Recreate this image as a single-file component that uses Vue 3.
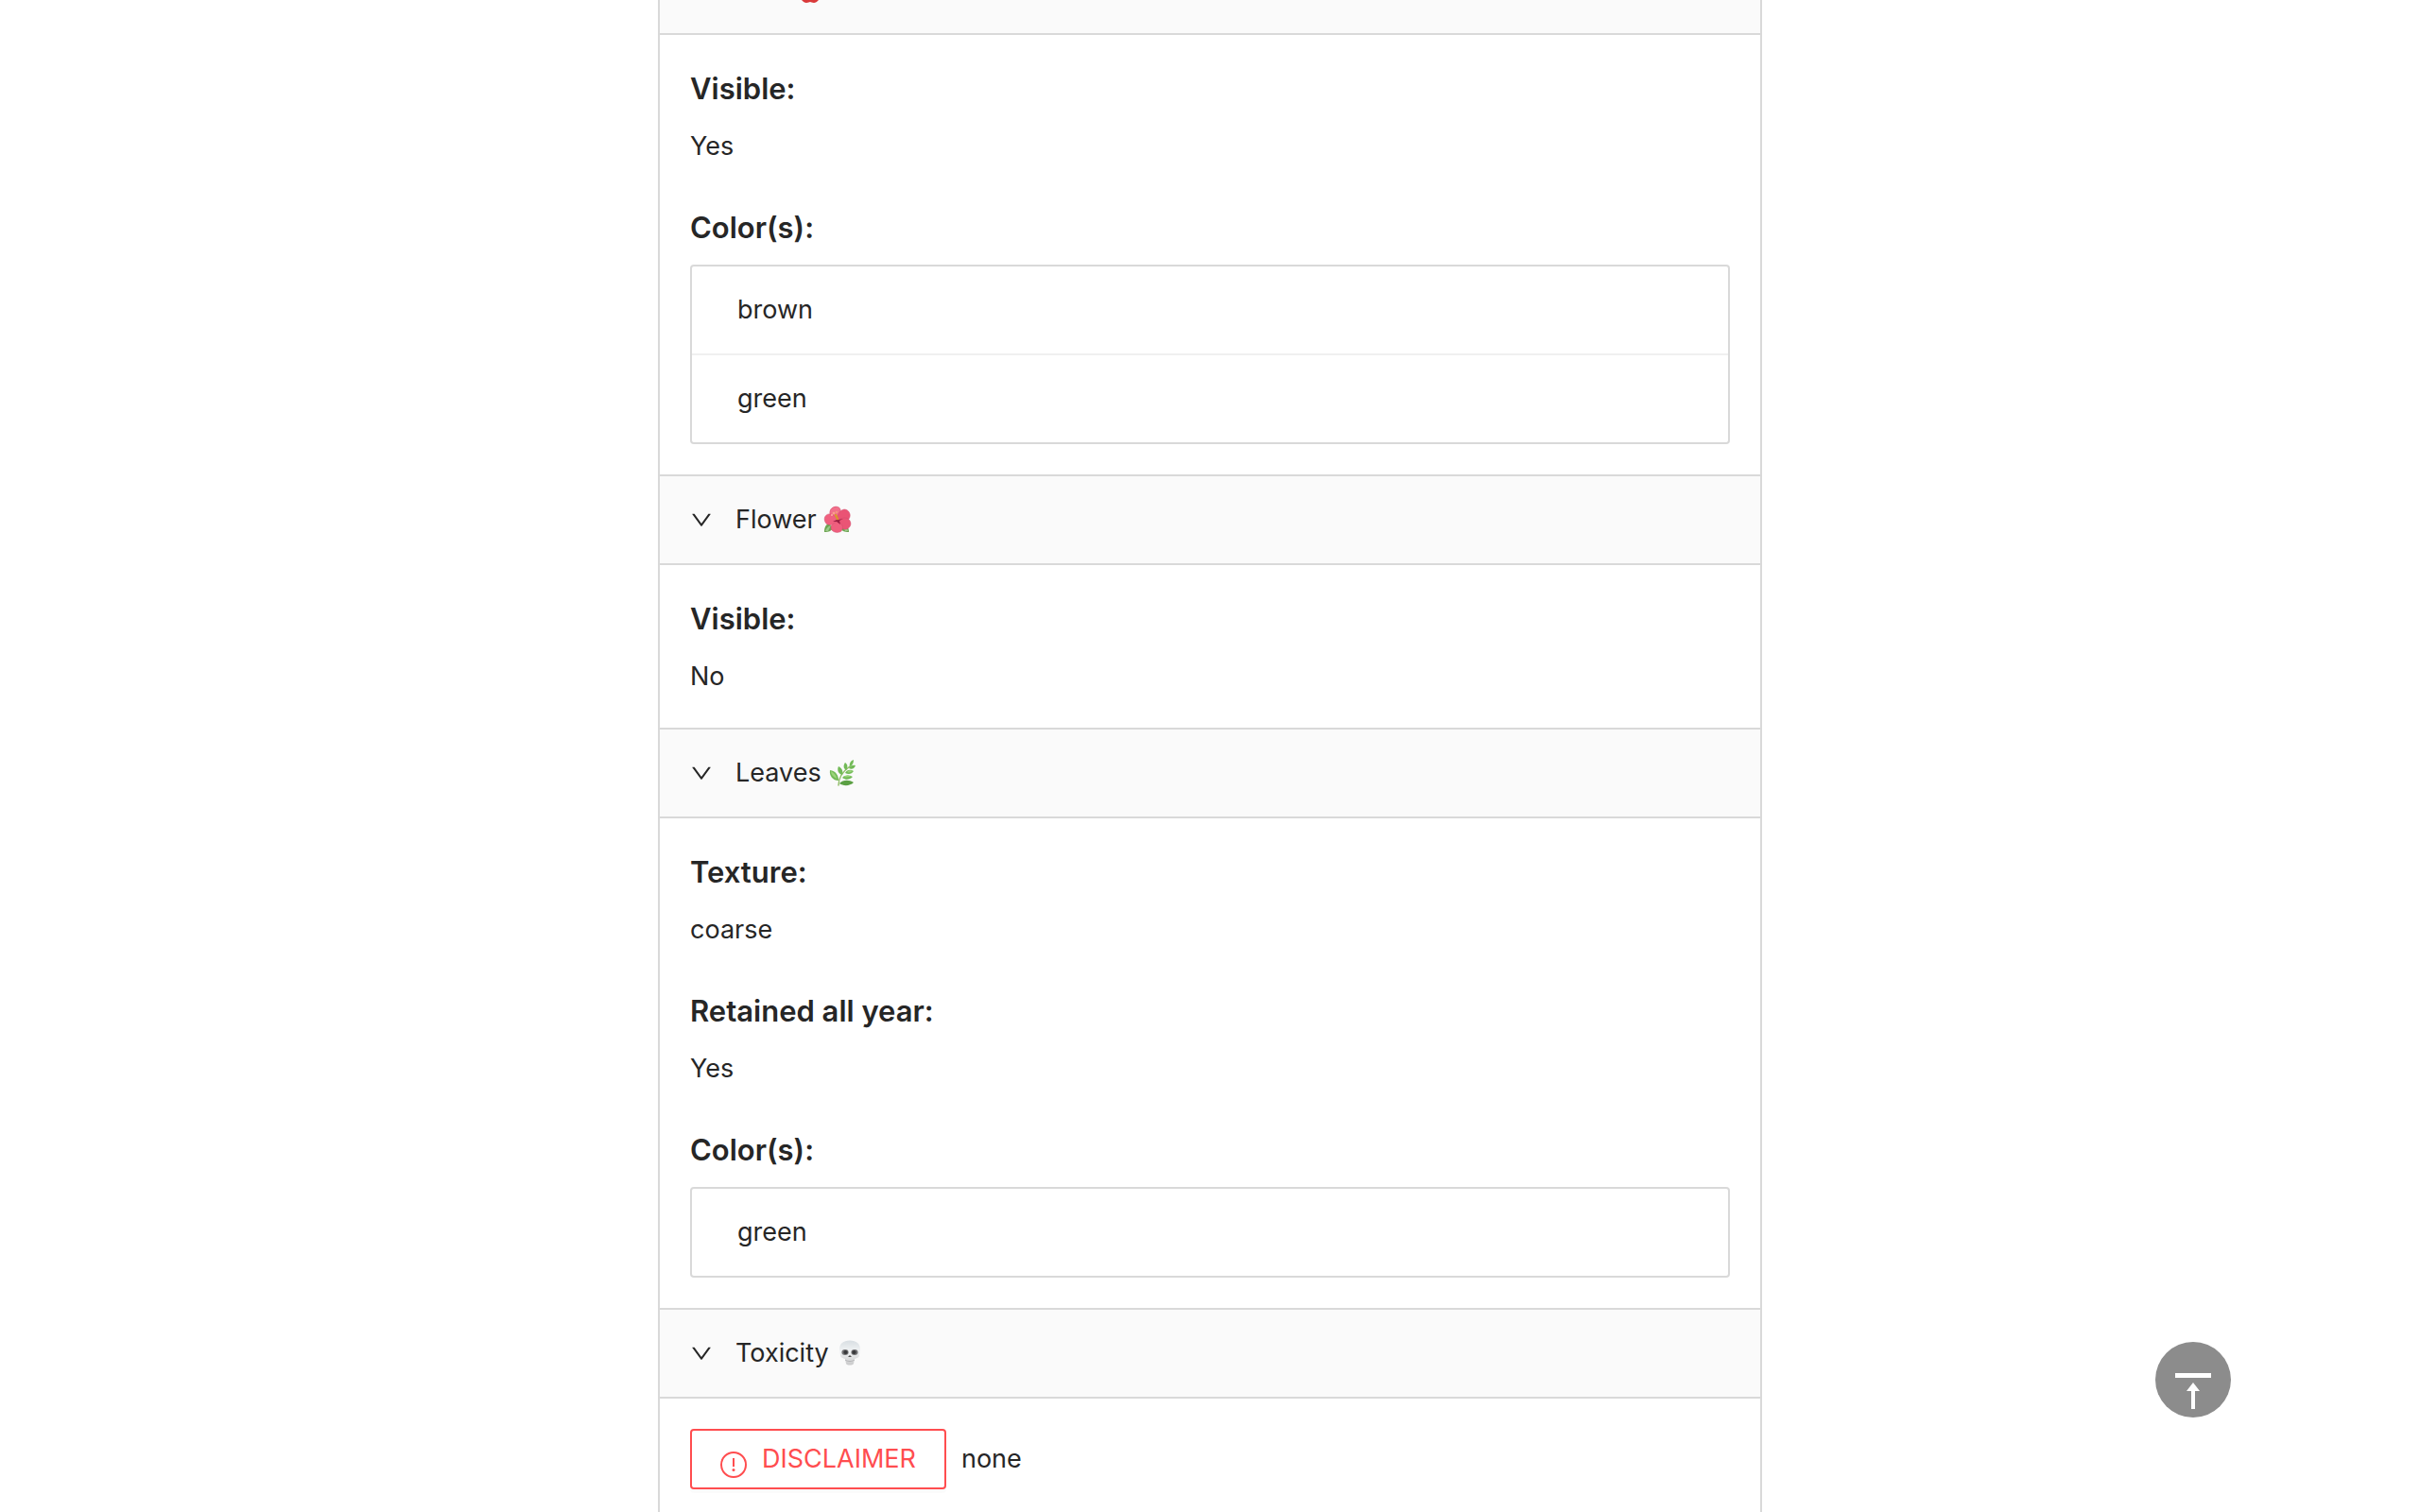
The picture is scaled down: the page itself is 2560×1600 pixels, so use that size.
<script setup>
import { reactive } from 'vue'

const panels = reactive([
  {
    id: 'fruit', title: 'Fruit', open: true,
    sections: [
      { label: 'Visible:', value: 'Yes' },
      { label: 'Color(s):', items: ['brown', 'green'] },
    ],
  },
  {
    id: 'flower', title: 'Flower', open: true,
    sections: [{ label: 'Visible:', value: 'No' }],
  },
  {
    id: 'leaves', title: 'Leaves', open: true,
    sections: [
      { label: 'Texture:', value: 'coarse' },
      { label: 'Retained all year:', value: 'Yes' },
      { label: 'Color(s):', items: ['green'] },
    ],
  },
  { id: 'toxicity', title: 'Toxicity', open: true, disclaimer: 'none' },
])

function toTop() {
  window.scrollTo({ top: 0, behavior: 'smooth' })
}
</script>

<template>
  <main class="page">
    <div class="collapse">
      <section v-for="panel in panels" :key="panel.id" class="panel">
        <button
          type="button"
          class="panel-header"
          :aria-expanded="panel.open"
          :aria-controls="'body-' + panel.id"
          @click="panel.open = !panel.open"
        >
          <svg class="arrow" :class="{ closed: !panel.open }" viewBox="0 0 1024 1024" aria-hidden="true">
            <path fill="currentColor" d="M884 270h-75c-5.100 0-9.900 2.500-12.900 6.600L512 668.200 227.900 276.600c-3-4.100-7.800-6.600-12.900-6.600h-75c-6.500 0-10.300 7.400-6.500 12.700l352.600 486.100c12.800 17.600 39 17.600 51.700 0l352.600-486.100c3.900-5.300.1-12.700-6.400-12.700z" />
          </svg>
          <span>{{ panel.title }}</span>

          <svg v-if="panel.id === 'fruit'" class="emoji" viewBox="0 0 36 36" aria-hidden="true">
            <path fill="#d9393a" d="M18 10C12 6 5 10 5 18c0 7 5 14 9 14 2 0 3-1 4-1s2 1 4 1c4 0 9-7 9-14 0-8-7-12-13-8z" />
            <path fill="none" stroke="#70502d" stroke-width="2" d="M18 11c0-3 1-5 3-7" />
          </svg>

          <svg v-else-if="panel.id === 'flower'" class="emoji" viewBox="0 0 36 36" aria-hidden="true">
            <path fill="#6da552" d="M4 31c0-4 1-8 5-9l4 4c-1 4-4 5-9 5zM30 31c-5 0-8-1-9-5l3-4c4 1 6 5 6 9z" />
            <path fill="#9bc98a" d="M5 30c1-3 3-5 6-6l-3 6zM29 30c-1-3-2-5-5-6l2 6z" />
            <g stroke="#d0486a" stroke-width="0.500">
              <path fill="#f2708a" d="M18 18c-6-1-9-5-8-9 1-5 9-7 11-2 1 4-1 8-3 11z" />
              <path fill="#ea5374" d="M18 19c-1-6 2-11 7-12 5 0 8 6 5 10-3 3-7 4-12 2z" />
              <path fill="#f0607f" d="M18 19c-3 4-8 6-12 3-4-5-1-11 5-10 3 1 6 3 7 7z" />
              <path fill="#ea5575" d="M18 19c5-4 11-4 13 0 3 5-2 10-6 9-4-1-7-4-7-9z" />
              <path fill="#ef5f7e" d="M18 19c5 3 7 7 4 11-4 3-11 1-11-4 0-3 4-5 7-7z" />
            </g>
            <path fill="#9d1f43" d="M17 15l2 3 5-1-4 2 1 4-4-3-4 0 4-2z" />
            <path fill="none" stroke="#d9962e" stroke-width="2.500" stroke-linecap="round" d="M18 17l-2-4" />
            <circle cx="14" cy="11" r="1.300" fill="#f8a38b" />
            <circle cx="17" cy="10" r="1.300" fill="#f3947f" />
            <circle cx="12" cy="13" r="1" fill="#ffb1a5" />
          </svg>

          <svg v-else-if="panel.id === 'leaves'" class="emoji" viewBox="0 0 36 36" aria-hidden="true">
            <path fill="none" stroke="#91bd68" stroke-width="1.500" stroke-linecap="round" d="M14 31c0-8 5-15 12-20" />
            <g fill="#72ba57">
              <path d="M14 26C8 26 4 21 5 15c6 1 9 5 9 11z" />
              <path d="M18 20c-4-1-6-5-4-9 4 2 5 5 4 9z" />
              <path d="M22 15c-3-2-3-5-1-8 3 2 3 5 1 8z" />
              <path d="M26 11c-1-3 1-6 4-7 0 3-1 6-4 7z" />
              <path d="M25 13c1-3 4-4 7-3-1 3-4 5-7 3z" />
              <path d="M21 18c2-4 6-4 9-2-2 3-5 4-9 2z" />
              <path d="M18 23c3-3 7-3 11-1-3 3-7 4-11 1z" />
              <path fill="#5ba044" d="M15 29c4-4 10-4 15-1-4 4-11 4-15 1z" />
            </g>
            <g fill="#9bd47a">
              <path d="M12 24c-4-2-6-5-6-8 4 2 6 5 6 8z" />
              <path d="M19 22c3-2 6-2 8 0-3 0-5 1-8 0z" />
              <path d="M23 17c2-2 4-2 6-1-2 1-4 2-6 1z" />
            </g>
          </svg>

          <svg v-else class="emoji" viewBox="0 0 36 36" aria-hidden="true">
            <defs>
              <linearGradient id="bone" x1="0" y1="0" x2="0" y2="1">
                <stop offset="0" stop-color="#d8dee2" />
                <stop offset="0.450" stop-color="#f2f4f5" />
                <stop offset="1" stop-color="#c9c9ca" />
              </linearGradient>
            </defs>
            <path fill="url(#bone)" d="M18 4.500C11 4.500 7 8 7 14c0 3 1 4 1 6 0 3 3 3 5 4l1 5c1 2 7 2 8 0l1-5c2-1 5-1 5-4 0-2 1-3 1-6 0-6-4-9.500-11-9.500z" />
            <ellipse cx="13" cy="17" rx="3.600" ry="3" fill="#747476" />
            <ellipse cx="23" cy="17" rx="3.600" ry="3" fill="#747476" />
            <ellipse cx="13.500" cy="17" rx="2.200" ry="2" fill="#39393b" />
            <ellipse cx="22.500" cy="17" rx="2.200" ry="2" fill="#39393b" />
            <path fill="#555" d="M18 20l2 2h-4z" />
            <path fill="none" stroke="#ababad" stroke-width="0.800" d="M13 25c3 2 7 2 10 0" />
          </svg>
        </button>

        <div v-show="panel.open" :id="'body-' + panel.id" class="panel-body">
          <div v-for="section in panel.sections" :key="section.label" class="section">
            <h5>{{ section.label }}</h5>
            <p v-if="section.value">{{ section.value }}</p>
            <ul v-else>
              <li v-for="item in section.items" :key="item">{{ item }}</li>
            </ul>
          </div>
          <div v-if="panel.disclaimer" class="disclaimer-row">
            <button type="button" class="disclaimer">
              <svg viewBox="0 0 32 32" aria-hidden="true">
                <circle cx="16" cy="16" r="13" fill="none" stroke="currentColor" stroke-width="2" />
                <path fill="currentColor" d="M15 9h2v9h-2z" />
                <circle cx="16" cy="21.500" r="1.500" fill="currentColor" />
              </svg>
              <span>DISCLAIMER</span>
            </button>
            <span>{{ panel.disclaimer }}</span>
          </div>
        </div>
      </section>
    </div>

    <button type="button" class="back-top" aria-label="Back to top" @click="toTop">
      <svg viewBox="0 0 40 40" aria-hidden="true">
        <path fill="currentColor" d="M1 3h38v5H1zM20 13l7 9h-5v19h-4V22h-5z" />
      </svg>
    </button>
  </main>
</template>

<style>
body {
  margin: 0;
  background: #fff;
}
</style>

<style scoped>
.page {
  height: 100vh;
  overflow: hidden;
  color: #262626;
  font-family: Inter, "Liberation Sans", sans-serif;
  font-size: 27px;
  line-height: 44px;
}

.collapse {
  box-sizing: border-box;
  max-width: 1168px;
  margin: -57px auto 0;
  border: 2px solid #d9d9d9;
  border-top: 0;
  background: #fff;
}

.panel + .panel {
  border-top: 2px solid #d9d9d9;
}

.panel-header {
  display: flex;
  align-items: center;
  box-sizing: border-box;
  width: 100%;
  padding: 24px 32px 24px 31px;
  border: 0;
  background: #fafafa;
  color: inherit;
  font: inherit;
  text-align: left;
  cursor: pointer;
}

.arrow {
  width: 26px;
  height: 26px;
  margin-right: 23px;
}

.arrow.closed {
  transform: rotate(-90deg);
}

.emoji {
  width: 36px;
  height: 36px;
  margin-left: 4px;
}

.panel-body {
  padding: 32px;
  border-top: 2px solid #d9d9d9;
}

.section + .section {
  margin-top: 39px;
}

h5 {
  margin: 0 0 14px;
  font-size: 31px;
  font-weight: 600;
  line-height: 50px;
}

p {
  margin: 0;
}

ul {
  margin: 0;
  padding: 0;
  border: 2px solid #d9d9d9;
  border-radius: 4px;
  list-style: none;
}

li {
  padding: 24px 48px;
}

li + li {
  border-top: 2px solid #f0f0f0;
}

.disclaimer-row {
  display: flex;
  align-items: center;
  gap: 16px;
}

.disclaimer {
  display: flex;
  align-items: center;
  gap: 14px;
  box-sizing: border-box;
  height: 64px;
  padding: 0 30px 0 28px;
  border: 2px solid #ff4d4f;
  border-radius: 4px;
  background: #fff;
  box-shadow: 0 4px 0 rgba(0, 0, 0, 0.016);
  color: #ff4d4f;
  font: inherit;
  cursor: pointer;
}

.disclaimer svg {
  width: 32px;
  height: 32px;
  margin-top: 12px;
}

.back-top {
  position: fixed;
  right: 200px;
  bottom: 100px;
  display: flex;
  align-items: center;
  justify-content: center;
  width: 80px;
  height: 80px;
  padding: 20px 0 0;
  border: 0;
  border-radius: 50%;
  background: #8c8c8c;
  color: #fff;
  cursor: pointer;
}

.back-top svg {
  width: 40px;
  height: 40px;
  overflow: visible;
}
</style>
